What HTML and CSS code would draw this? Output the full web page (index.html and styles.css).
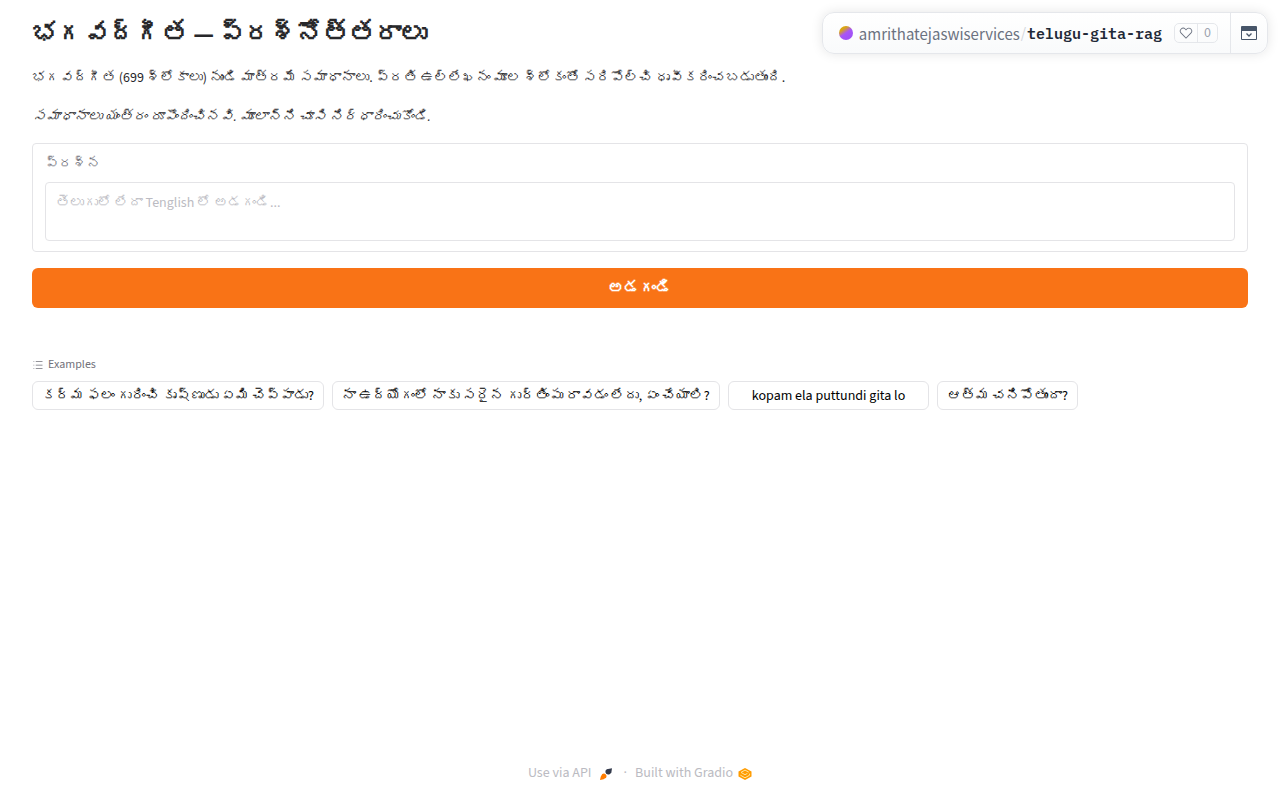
FILE: index.html
```html
<!DOCTYPE html>
<html lang="en">
<head>
    <meta charset="UTF-8">
    <meta name="viewport" content="width=device-width, initial-scale=1.0">
    <title>telugu-gita-rag</title>
    <link rel="stylesheet" href="styles.css">
</head>
<body>
    <!-- Space header -->
    <div class="space-header">
        <div class="space-info">
            <span class="avatar"></span>
            <a href="#" class="owner">amrithatejaswiservices</a>
            <span class="slash">/</span>
            <a href="#" class="space-name">telugu-gita-rag</a>
            <button class="like-button" aria-label="Like">
                <span class="like-icon">
                    <svg width="14" height="14" viewBox="0 0 32 32" fill="currentColor"><path d="M22.45 6a5.47 5.47 0 0 1 3.91 1.64 5.7 5.7 0 0 1 0 8L16 26.13 5.64 15.64a5.7 5.7 0 0 1 0-8 5.48 5.48 0 0 1 7.82 0L16 10.24l2.53-2.58A5.44 5.44 0 0 1 22.45 6m0-2a7.47 7.47 0 0 0-5.34 2.24L16 7.36l-1.11-1.12a7.49 7.49 0 0 0-10.68 0 7.72 7.72 0 0 0 0 10.82L16 29l11.79-11.94a7.72 7.72 0 0 0 0-10.82A7.49 7.49 0 0 0 22.45 4z"/></svg>
                </span>
                <span class="like-count">0</span>
            </button>
        </div>
        <button class="collapse-button" aria-label="Collapse header">
            <svg width="16" height="14" viewBox="0 0 16 14"><path fill="currentColor" fill-rule="evenodd" d="M1 0h14a1 1 0 0 1 1 1v12a1 1 0 0 1-1 1H1a1 1 0 0 1-1-1V1a1 1 0 0 1 1-1zm0 5v8h14V5z"/><path d="M5.5 7.5 8 10l2.5-2.5" fill="none" stroke="currentColor" stroke-width="1.3"/></svg>
        </button>
    </div>

    <main class="app">
        <h1>భగవద్గీత — ప్రశ్నోత్తరాలు</h1>
        <p class="intro">భగవద్గీత (699 శ్లోకాలు) నుండి మాత్రమే సమాధానాలు. ప్రతి ఉల్లేఖనం మూల శ్లోకంతో సరిపోల్చి ధృవీకరించబడుతుంది.</p>
        <p class="intro"><em>సమాధానాలు యంత్రం రూపొందించినవి. మూలాన్ని చూసి నిర్ధారించుకోండి.</em></p>

        <!-- Question form -->
        <form class="question-form">
            <div class="question-block">
                <label for="question">ప్రశ్న</label>
                <textarea id="question" class="question-input" rows="2" placeholder="తెలుగులో లేదా Tenglish లో అడగండి..."></textarea>
            </div>
            <button type="button" class="ask-button">అడగండి</button>
        </form>

        <!-- Examples -->
        <section class="examples">
            <div class="examples-label">
                <svg width="12" height="12" viewBox="0 0 32 32" fill="currentColor"><path d="M10 6h18v2H10zm0 18h18v2H10zm0-9h18v2H10zm-6 0h2v2H4zm0-9h2v2H4zm0 18h2v2H4z"/></svg>
                Examples
            </div>
            <div class="gallery">
                <button class="example">కర్మ ఫలం గురించి కృష్ణుడు ఏమి చెప్పాడు?</button>
                <button class="example">నా ఉద్యోగంలో నాకు సరైన గుర్తింపు రావడం లేదు, ఏం చేయాలి?</button>
                <button class="example example-wide">kopam ela puttundi gita lo</button>
                <button class="example">ఆత్మ చనిపోతుందా?</button>
            </div>
        </section>
    </main>

    <footer>
        <button class="api-button">
            Use via API
            <svg width="12" height="12" viewBox="0 0 12 12"><path d="M0 12 .8 8.4 3 6l3 3-2.4 2.2z" fill="#ff7c00"/><circle cx="4" cy="8" r="2.5" fill="#ff7c00"/><path d="M5.5 3 8 1l4-.8-.6 4L9 6.5z" fill="#343b4d"/><circle cx="8.2" cy="3.8" r="2.7" fill="#343b4d"/><path d="m3.5 3.7 4.8 4.8" stroke="#fff" stroke-width="1"/></svg>
        </button>
        <span class="dot">·</span>
        <a href="#" class="built-with">
            Built with Gradio
            <svg width="14" height="12" viewBox="0 0 14 12"><path d="M7 0 13.5 3.6v4.8L7 12 .5 8.4V3.6z" fill="#ff9c00"/><path d="M10.8 4.2 7 2.1 3 4.4l4 2.3 2.4-1.3M2.4 7.2 7 9.8l4.6-2.6V5.6" fill="none" stroke="#ffe3a3" stroke-width="1"/></svg>
        </a>
    </footer>
</body>
</html>
```

FILE: styles.css
```css
* {
    box-sizing: border-box;
}
body {
    display: flex;
    flex-direction: column;
    min-height: 100vh;
    margin: 0;
    background-color: #fff;
    color: #27272a;
    font-family: "Source Sans Pro", "Source Sans 3", Unifont, "Noto Sans", sans-serif;
    font-size: 14px;
    line-height: 21px;
}
button,
textarea {
    font-family: inherit;
}
button {
    cursor: pointer;
}
a {
    text-decoration: none;
}
/* Floating header over the app */
.space-header {
    position: absolute;
    top: 12px;
    right: 12px;
    display: flex;
    height: 42px;
    border: 1px solid #e5e7eb;
    border-radius: 12px;
    background: linear-gradient(#fff, #f9fafb);
    box-shadow: 0 0 12px rgba(0, 0, 0, 0.1);
    overflow: hidden;
}
.space-info {
    display: flex;
    align-items: center;
    padding: 0 12px 0 16px;
    font-size: 15px;
}
.avatar {
    width: 14px;
    height: 14px;
    margin-right: 6px;
    border-radius: 50%;
    background: linear-gradient(145deg, #d9a514 25%, #a855f7 50%, #9b4df5);
}
.owner {
    color: #6b7280;
    font-family: "Noto Sans CJK JP", sans-serif;
}
.slash {
    margin: 0 1px;
    color: #d1d5db;
}
.space-name {
    color: #1f2937;
    font-family: "IBM Plex Mono", "Liberation Mono", monospace;
    font-weight: 600;
}
.like-button {
    display: flex;
    align-items: center;
    height: 20px;
    margin-left: 12px;
    padding: 0;
    border: 1px solid #e5e7eb;
    border-radius: 5px;
    background-color: transparent;
    color: #6b7280;
    font-size: 14px;
}
.like-icon {
    display: flex;
    padding: 0 4px;
}
.like-count {
    padding: 0 6px;
    border-left: 1px solid #e5e7eb;
    color: #9ca3af;
    line-height: 18px;
}
.collapse-button {
    display: flex;
    align-items: center;
    padding: 0 10px;
    border: none;
    border-left: 1px solid #e5e7eb;
    background-color: transparent;
    color: #475569;
}
/* App content */
.app {
    flex: 1;
    padding: 17px 32px;
}
h1 {
    margin: 0;
    font-size: 26px;
    line-height: 33px;
}
.intro {
    margin: 18px 0 0;
}
.question-form {
    display: flex;
    flex-direction: column;
    gap: 16px;
    margin-top: 15px;
}
.question-block {
    display: flex;
    flex-direction: column;
    gap: 7px;
    padding: 10px 12px;
    border: 1px solid #e4e4e7;
    border-radius: 4px;
}
.question-block label {
    color: #71717a;
}
.question-input {
    width: 100%;
    height: 59px;
    padding: 10px;
    border: 1px solid #e4e4e7;
    border-radius: 4px;
    color: #27272a;
    font-size: 14px;
    line-height: 20px;
    resize: none;
}
.question-input::placeholder {
    color: #bbbbc2;
}
.ask-button {
    height: 40px;
    border: none;
    border-radius: 6px;
    background-color: #f97316;
    color: #fff;
    font-size: 16px;
    font-weight: bold;
}
.examples {
    margin-top: 48px;
}
.examples-label {
    display: flex;
    align-items: center;
    gap: 4px;
    margin-bottom: 7px;
    color: #71717a;
    font-size: 12px;
    line-height: 18px;
}
.gallery {
    display: flex;
    flex-wrap: wrap;
    gap: 8px;
}
.example {
    height: 29px;
    padding: 0 9px;
    border: 1px solid #e4e4e7;
    border-radius: 6px;
    background-color: #fff;
    color: #000;
    font-size: 14px;
}
.example-wide {
    padding: 0 23px;
}
/* Footer */
footer {
    display: flex;
    justify-content: center;
    align-items: center;
    padding-bottom: 16px;
    color: #bbbbc2;
}
.api-button,
.built-with {
    display: flex;
    align-items: center;
    padding: 0;
    border: none;
    background-color: transparent;
    color: inherit;
    font-size: 14px;
    line-height: 21px;
}
.api-button {
    gap: 8px;
}
.built-with {
    gap: 5px;
}
.dot {
    margin: 0 8px 0 12px;
}
```
